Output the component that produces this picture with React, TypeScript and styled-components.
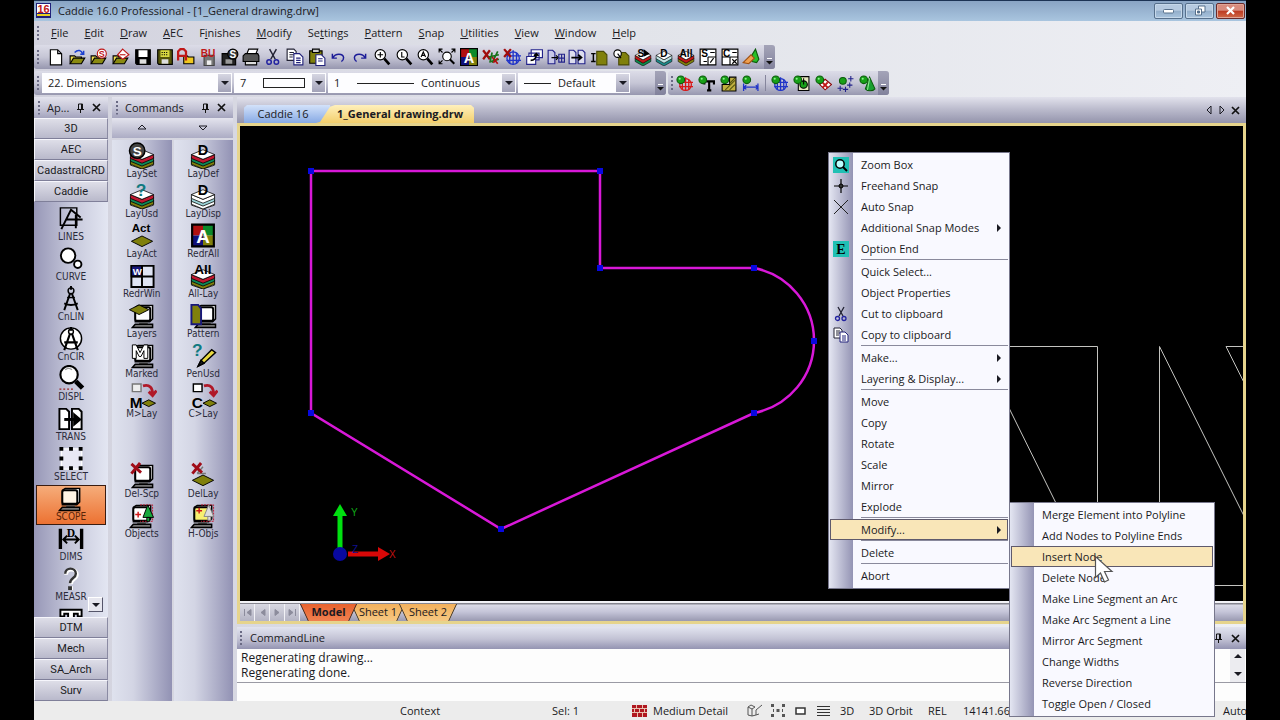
import React from 'react';
import styled, { createGlobalStyle, css } from 'styled-components';

const ui = '"Open Sans", "Noto Sans", sans-serif';
const toolGradient = 'linear-gradient(#dcdce8, #c6c6d6 50%, #9797af)';
const headGradient = 'linear-gradient(#e4e4ee, #c4c4d6 55%, #a3a3bd)';

const GlobalStyle = createGlobalStyle`
  * { box-sizing: border-box; }
  body { margin: 0; background: #000; font: 11px/16px ${ui}; color: #1a1a22; }
  button, select, input { font: inherit; color: inherit; margin: 0; padding: 0; border: 0; background: none; border-radius: 0; outline: none; }
  svg { display: block; flex: none; }
`;

/* ---------- window ---------- */
const Page = styled.div`
  height: 100vh;
  padding: 0 34px;
  background: #000;
`;
const Window = styled.div`
  position: relative;
  height: 100%;
  min-height: 560px;
  display: flex;
  flex-direction: column;
  background: linear-gradient(90deg, #d2d2de, #e2e4ea 50%, #eeeff4);
`;
const TitleBar = styled.header`
  height: 21px;
  flex: none;
  display: flex;
  align-items: center;
  gap: 7px;
  padding: 0 1px 1px 2px;
  border-top: 1px solid #1c3354;
  background: linear-gradient(#89a4c4, #a9c5df);
`;
const Title = styled.h1`
  margin: 0;
  flex: 1;
  font-size: 11px;
  font-weight: 400;
`;
const WindowButtons = styled.div`
  display: flex;
  gap: 2px;
`;
const WindowButton = styled.button<{ $close?: boolean }>`
  width: 29px;
  height: 16px;
  display: grid;
  place-items: center;
  border: 1px solid ${(p) => (p.$close ? '#6a2a2a' : '#57708c')};
  border-radius: 2px;
  box-shadow: inset 0 0 0 1px ${(p) => (p.$close ? '#e0a596' : '#c6d8ea')};
  background: ${(p) =>
    p.$close ? 'linear-gradient(#d88c7e 45%, #bd3a22 50%, #d06a48)' : 'linear-gradient(#b6cae0 45%, #93aeca 50%, #a9c4de)'};
`;
const MenuBar = styled.nav`
  height: 24px;
  flex: none;
  display: flex;
  align-items: center;
  padding-left: 3px;
`;
const Grip = styled.span`
  width: 3px;
  height: 14px;
  flex: none;
  background: repeating-linear-gradient(#6a6a84 0 2px, transparent 2px 4px);
  clip-path: inset(0 1px 0 0);
`;
const MenuItem = styled.button`
  margin-right: 16px;
  white-space: nowrap;
  &:first-of-type { margin-left: 11px; }
`;

/* ---------- toolbars ---------- */
const ToolRow = styled.div`
  display: flex;
  flex: none;
  padding-bottom: 2px;
  gap: 2px;
`;
const Toolbar = styled.div`
  height: 24px;
  display: flex;
  align-items: center;
  padding-left: 3px;
  border-radius: 3px;
  background: ${toolGradient};
`;
const ToolStrip = styled.div<{ $width: number; $inset?: boolean }>`
  display: flex;
  width: ${(p) => p.$width}px;
  margin: ${(p) => (p.$inset ? '0 2px 0 5px' : '0')};
`;
const ToolButton = styled.button`
  flex: 1 1 0;
  min-width: 0;
  height: 20px;
  display: grid;
  place-items: center;
`;
const Divider = styled.span`
  width: 1px;
  height: 16px;
  margin: 2px 3px;
  background: #85859c;
`;
const Overflow = styled.button`
  align-self: stretch;
  width: 11px;
  display: flex;
  align-items: flex-end;
  justify-content: center;
  padding-bottom: 4px;
  border-radius: 0 3px 3px 0;
  background: linear-gradient(#a4a4b8, #82829c);
`;
const Combo = styled.label<{ $width: number }>`
  width: ${(p) => p.$width}px;
  height: 20px;
  margin-left: 2px;
  display: flex;
  align-items: center;
  gap: 7px;
  padding-left: 6px;
  background: #fdfdff;
`;
const ComboSelect = styled.select`
  flex: 1;
  min-width: 0;
  height: 20px;
  appearance: none;
`;
const ComboArrow = styled.span`
  width: 13px;
  height: 18px;
  margin-right: 1px;
  display: grid;
  place-items: center;
  background: linear-gradient(#d6d6e2, #a2a2b8);
`;
const PenNumber = styled.span`
  width: 16px;
`;
const Swatch = styled.span`
  width: 42px;
  height: 10px;
  margin-left: auto;
  border: 1px solid #222;
`;
const LineSample = styled.span<{ $width: number }>`
  width: ${(p) => p.$width}px;
  height: 1px;
  background: #222;
`;

/* ---------- workspace ---------- */
const Workspace = styled.div`
  flex: 1;
  min-height: 0;
  display: flex;
`;
const Panel = styled.aside<{ $width: number }>`
  width: ${(p) => p.$width}px;
  flex: none;
  display: flex;
  flex-direction: column;
  margin-right: 4px;
`;
const PanelHead = styled.div`
  height: 21px;
  flex: none;
  display: flex;
  align-items: center;
  padding: 0 7px 0 4px;
  gap: 6px;
  background: ${headGradient};
`;
const PanelTitle = styled.h2`
  flex: 1;
  margin: 0;
  font-size: 11px;
  font-weight: 400;
`;
const IconButton = styled.button`
  display: grid;
  place-items: center;
  width: 10px;
  height: 12px;
`;
const GroupButton = styled.button`
  height: 21px;
  flex: none;
  font: 11px/19px Roboto, "Liberation Sans", sans-serif;
  border: 1px solid;
  border-color: #f6f6fc #8b8ba3 #7f7f99 #f6f6fc;
  background: linear-gradient(#dedee8, #b9b9cb);
`;
const ToolList = styled.div<{ $side: 'left' | 'right' }>`
  position: relative;
  flex: 1 1 0;
  min-width: 0;
  min-height: 0;
  overflow: hidden;
  display: flex;
  flex-direction: column;
  align-items: stretch;
  padding: ${(p) => (p.$side === 'left' ? 3 : 2)}px 2px 0;
  background: ${(p) =>
    p.$side === 'left'
      ? 'linear-gradient(90deg, #9797b7, #c5c7da 50%, #e3e6f2)'
      : 'linear-gradient(90deg, #dfe2ee, #d3d5e4 35%, #9292b4)'};
`;
const ListItem = styled.button<{ $active?: boolean; $hidden?: boolean }>`
  height: 40px;
  flex: none;
  display: flex;
  flex-direction: column;
  align-items: center;
  font: 10px/10px "DejaVu Sans Condensed", "DejaVu Sans", sans-serif;
  color: #2b2b3a;
  visibility: ${(p) => (p.$hidden ? 'hidden' : 'visible')};
  ${(p) =>
    p.$active &&
    css`
      color: #5a2408;
      box-shadow: inset 0 0 0 1px #3a1c10;
      background: linear-gradient(#f6ae7c, #ec7030);
    `}
`;
const ScrollDown = styled.button`
  position: absolute;
  right: 5px;
  bottom: 5px;
  width: 15px;
  height: 15px;
  display: grid;
  place-items: center;
  border: 1px solid;
  border-color: #fff #55556a #55556a #fff;
  background: #e6e6ee;
`;
const CommandScroll = styled.div`
  display: flex;
  flex: none;
  height: 20px;
  background: linear-gradient(#e4e4ee, #acacc4);
`;
const CommandScrollButton = styled.button`
  flex: 1;
  display: grid;
  place-items: center;
`;
const CommandColumns = styled.div`
  flex: 1;
  min-height: 0;
  display: flex;
  gap: 2px;
  padding-top: 2px;
`;
const Main = styled.main`
  flex: 1;
  min-width: 0;
  display: flex;
  flex-direction: column;
`;
const TabStrip = styled.div`
  height: 26px;
  flex: none;
  display: flex;
  align-items: flex-end;
  padding: 0 6px 0 7px;
  background: linear-gradient(#e2e2ec, #b9b9cb 50%, #9494ac);
`;
const DocTab = styled.button<{ $active?: boolean }>`
  height: 18px;
  width: ${(p) => (p.$active ? 158 : 88)}px;
  padding: ${(p) => (p.$active ? '0 0 0 10px' : '0 10px 0 0')};
  font-weight: ${(p) => (p.$active ? 700 : 400)};
  margin-left: ${(p) => (p.$active ? -16 : 0)}px;
  clip-path: ${(p) =>
    p.$active
      ? 'polygon(0 100%, 4px 94%, 14px 10%, 19px 0, calc(100% - 3px) 0, 100% 15%, 100% 100%)'
      : 'polygon(0 15%, 3px 0, 86px 0, 100% 100%, 0 100%)'};
  background: ${(p) =>
    p.$active ? 'linear-gradient(#fff0bc, #f3cf6c)' : 'linear-gradient(#d3e2fa, #86a9e4)'};
`;
const TabControls = styled.div`
  display: flex;
  gap: 3px;
  margin-left: auto;
  align-self: center;
`;
const DrawingFrame = styled.section`
  flex: 1;
  min-height: 0;
  display: flex;
  flex-direction: column;
  border: 3px solid #e6d48c;
`;
const Canvas = styled.div`
  flex: 1;
  min-height: 0;
  background: #000;
  overflow: hidden;
`;
const SheetRow = styled.div`
  height: 20px;
  flex: none;
  display: flex;
  padding-top: 1px;
  border-top: 2px solid #f2f2f6;
  background: linear-gradient(#85858f 1px, #dcdce8 2px, #c4c4d8 50%, #9999b0);
`;
const SheetNav = styled.button`
  width: 15px;
  display: grid;
  place-items: center;
  border-right: 1px solid #f2f2f6;
  background: linear-gradient(#d8d8e2, #b4b4c4);
`;
const SheetTab = styled.button<{ $active?: boolean; $width: number }>`
  position: relative;
  width: ${(p) => p.$width}px;
  margin-right: -6px;
  padding-bottom: 2px;
  z-index: ${(p) => (p.$active ? 1 : 0)};
  font-weight: ${(p) => (p.$active ? 700 : 400)};
  clip-path: polygon(0 0, 100% 0, calc(100% - 8px) 100%, 8px 100%);
  background: ${(p) => (p.$active ? 'linear-gradient(#e8622e, #f08050)' : 'linear-gradient(#f2b05c, #f6c882)')};
`;
const SheetEdges = styled.svg`
  position: absolute;
  inset: 0;
  width: 100%;
  height: 100%;
`;
const CommandHead = styled.div`
  height: 22px;
  flex: none;
  display: flex;
  align-items: center;
  gap: 7px;
  margin-top: 3px;
  padding: 0 6px 0 3px;
  background: linear-gradient(#e2e4f0, #c2c2d4 55%, #9494b2);
`;
const Log = styled.div`
  height: 34px;
  flex: none;
  display: flex;
  background: #fdfdfd;
  border-bottom: 1px solid #9a9aa4;
`;
const LogLines = styled.ul`
  flex: 1;
  margin: 0;
  padding: 1px 4px;
  list-style: none;
  font-size: 12px;
  line-height: 15px;
`;
const LogScroll = styled.div`
  width: 15px;
  margin-right: 1px;
  display: flex;
  flex-direction: column;
  justify-content: space-around;
  align-items: center;
  background: #ececf0;
`;
const CommandInput = styled.input`
  height: 18px;
  flex: none;
  width: 100%;
  padding: 0 4px;
  background: #fdfdfd;
`;
const StatusBar = styled.footer`
  height: 19px;
  flex: none;
  display: flex;
  align-items: center;
  overflow: hidden;
  white-space: nowrap;
  background: #ececec;
`;
const StatusCell = styled.span<{ $width: number; $end?: boolean }>`
  width: ${(p) => p.$width}px;
  flex: none;
  display: flex;
  align-items: center;
  gap: 6px;
  margin-left: ${(p) => (p.$end ? 'auto' : '0')};
`;
const StatusSpacer = styled.span`
  width: 366px;
  flex: 0 1 auto;
`;

/* ---------- floating menus ---------- */
const Popup = styled.div<{ $left: number; $top: number; $width: number }>`
  position: absolute;
  z-index: 5;
  left: ${(p) => p.$left}px;
  top: ${(p) => p.$top}px;
  width: ${(p) => p.$width}px;
  display: flex;
  flex-direction: column;
  padding: 1px 1px 2px;
  border: 1px solid #77778c;
  background: linear-gradient(90deg, #e4e6f2, #9494b4 24px, #f9f9ff 24px);
`;
const PopupItem = styled.button<{ $active?: boolean }>`
  height: 21px;
  display: flex;
  align-items: center;
  text-align: left;
  padding: 0 4px 0 2px;
  ${(p) =>
    p.$active &&
    css`
      background: #f9e6b8;
      box-shadow: inset 0 0 0 1px #5f5a6c;
    `}
`;
const PopupIcon = styled.span`
  width: 17px;
  margin-right: 12px;
  display: grid;
  place-items: center;
  flex: none;
`;
const PopupLabel = styled.span`
  flex: 1;
`;
const PopupRule = styled.hr`
  width: calc(100% - 31px);
  height: 2px;
  margin: 0 0 0 31px;
  border: 0;
  border-top: 1px solid #8a8a9c;
`;
const Pointer = styled.svg`
  position: absolute;
  z-index: 9;
  left: 1060px;
  top: 555px;
`;

/* ---------- icon pieces ---------- */
type Kids = { children?: React.ReactNode };
const Ico = ({ children, s = 18 }: Kids & { s?: number }) => (
  <svg width={s} height={s} viewBox="0 0 16 16" fill="none" stroke="#000" strokeWidth="1">
    {children}
  </svg>
);
const Big = ({ children }: Kids) => (
  <svg width="30" height="27" viewBox="0 0 30 28" fill="none" stroke="#000" strokeWidth="1.5">
    {children}
  </svg>
);
const T = ({ x, y, z = 9, c = '#000', children, f = 'Liberation Sans' }: Kids & { x: number; y: number; z?: number; c?: string; f?: string }) => (
  <text x={x} y={y} fontSize={z} fill={c} stroke="none" fontWeight="700" fontFamily={f} textAnchor="middle">
    {children}
  </text>
);
const Folder = () => (
  <>
    <path d="M1 14V7h4l1 1h5v2" fill="#f0e050" />
    <path d="M1 14l3-5h10l-3 5z" fill="#8a8a10" />
  </>
);
const Floppy = ({ label = '#fff', body = '#000' }: { label?: string; body?: string }) => (
  <>
    <path d="M1.5 1.5h13v13h-12l-1-1z" fill={body} />
    <path d="M4 2h8v6H4z" fill={label} stroke="none" />
    <path d="M5 10h6v4H5z" fill="#ddd" stroke="none" />
  </>
);
const Lens = ({ children }: Kids) => (
  <>
    <circle cx="6.5" cy="6" r="4.6" fill="#fff" />
    <path d="M10 9.500l4.500 5" strokeWidth="2.400" />
    {children}
  </>
);
const Globe = ({ c }: { c: string }) => (
  <g stroke={c} strokeWidth="1.200">
    <circle cx="9" cy="9" r="5.500" />
    <path d="M9 2v13M3 7h13M3 11h13M6 4v10M12 4v10" />
  </g>
);
const Stack = ({ a = '#c01818', b = '#0c8a4a', top = '#fff' }: { a?: string; b?: string; top?: string }) => (
  <g strokeWidth=".5">
    <path d="M1 9l7 4 7-4v3l-7 4-7-4z" fill={b} />
    <path d="M1 6.500l7 4 7-4v3l-7 4-7-4z" fill={a} />
    <path d="M1 6.500l7-3.500 7 3.500-7 4z" fill={top} />
  </g>
);
const Ball = () => (
  <>
    <circle cx="4.500" cy="4.500" r="3.600" fill="#18a018" stroke="#0b5c0b" />
    <circle cx="3.500" cy="3.500" r="1" fill="#8cf08c" stroke="none" />
  </>
);
const Scissors = () => (
  <>
    <path d="M5 1l5 9M11 1l-5 9" stroke="#223" strokeWidth="1.300" />
    <circle cx="4.500" cy="12.500" r="2" stroke="#2222a0" strokeWidth="1.300" />
    <circle cx="11" cy="12.500" r="2" stroke="#2222a0" strokeWidth="1.300" />
  </>
);
const CopyPages = () => (
  <>
    <path d="M1 1h6l2 2v8H1zM3 4h4M3 6h4M3 8h3" fill="#fff" stroke="#223" />
    <path d="M7 5h5l3 3v7H7zM9 9h4M9 11h4M9 13h4" fill="#fff" stroke="#22227a" />
  </>
);
const ColourA = () => (
  <>
    <path d="M0 0h8v8H0z" fill="#b01010" stroke="none" />
    <path d="M8 0h8v8H8z" fill="#0c8a2a" stroke="none" />
    <path d="M0 8h8v8H0z" fill="#10107a" stroke="none" />
    <path d="M8 8h8v8H8z" fill="#80800c" stroke="none" />
    <path d="M.5.5h15v15H.5z" />
    <T x={8} y={13} z={13} c="#fff">A</T>
  </>
);

const mainTools: [string, React.ReactNode][] = [
  ['New', <path d="M3 1.500h6.500l3.500 3.500v10H3zM9.500 1.500V5H13" fill="#fff" />],
  ['Open', <><Folder /><path d="M5 4c3-3 6-2 7 1M13 2.500v3h-3" stroke="#1c40d0" strokeWidth="1.400" /></>],
  ['Open symbol', <><Folder /><circle cx="10.500" cy="5" r="4" fill="#fff" stroke="#c01818" /><T x={10.5} y={8} z={8} c="#c01818">S</T></>],
  ['Open reference', <><Folder /><path d="M9.500 1l5.500 5-5.500 4L5 6z" fill="#fff" stroke="#c01818" /><path d="M7 6h5" stroke="#c01818" /></>],
  ['Save', <Floppy />],
  ['Save as', <><Floppy label="#d8d840" body="#55550a" /><path d="M5 4h6M5 6h6" strokeDasharray="1 1" /></>],
  ['Archive', <><path d="M6 14V7h3l1 1h5v6z" fill="#f0c820" /><path d="M1 11V3l2-2h3l2 2v8M1 7h7" stroke="#c01818" strokeWidth="2" /></>],
  ['Backup', <><path d="M4.500 6.500h9v9h-9z" fill="#777" stroke="#444" /><path d="M7 11h4v4H7z" fill="#eee" stroke="none" /><T x={8} y={8} z={9} c="#c01818">BU</T></>],
  ['Save symbol', <><path d="M1 5h12v10H1z" fill="#222" /><path d="M4 10h6v4H4z" fill="#999" stroke="none" /><circle cx="10.500" cy="5.500" r="4.500" fill="#333" /><T x={10.5} y={9} z={9} c="#fff">S</T></>],
  ['Print', <><path d="M4 6l2-5h8l-2 5" fill="#fff" /><path d="M1 7l2-2h11l1 2v5H1z" fill="#555" /><path d="M3 12h10v3H3z" fill="#ddd" /></>],
  ['Cut', <Scissors />],
  ['Copy', <CopyPages />],
  ['Paste', <><path d="M1.500 2.500h11v11h-11z" fill="#80800c" /><path d="M4 1h6v3H4z" fill="#ccc" /><path d="M7 6h5l3 3v6.500H7zM9 9.500h4M9 11.500h4" fill="#fff" stroke="#22227a" /></>],
  ['Undo', <path d="M3 5v4h4M3.500 8.500c2-4 9-4 9.500 0 0 2-1 3-2 3.500" stroke="#1c1c98" strokeWidth="1.300" />],
  ['Redo', <path d="M13 5v4H9M12.500 8.500c-2-4-9-4-9.500 0 0 2 1 3 2 3.500" stroke="#1c1c98" strokeWidth="1.300" />],
  ['Zoom in', <Lens><path d="M4 6h5M6.500 3.500v5" /></Lens>],
  ['Zoom 1:1', <Lens><path d="M6 3.500V8h2.500" /></Lens>],
  ['Zoom all', <Lens><path d="M4.500 8l2-4.500 2 4.500M5.500 6.500h2" /></Lens>],
  ['Zoom extents', <><circle cx="8" cy="7.500" r="3.800" fill="#fff" /><path d="M10.500 10l4 4" strokeWidth="1.800" /><path d="M1 1l3 3M15 1l-3 3M1 14l3-3M1 4V1h3M12 1h3v3M1 11v3h3" /></>],
  ['Redraw', <ColourA />],
  ['Delete marks', <><path d="M1 2l6 8M7 2l-6 8" stroke="#a00c0c" strokeWidth="2" /><path d="M9 4l-2 9M14 3L9 13M6 8l9-2M8 12l7-2" stroke="#187018" strokeWidth="1.500" /><path d="M9 8l5 6M14 9l-4 4" stroke="#b01010" strokeWidth="1.500" /></>],
  ['Delete view', <><Globe c="#2034c8" /><path d="M1 1l6 7M7 1L1 8" stroke="#a00c0c" strokeWidth="2" /></>],
  ['Cascade', <><path d="M5.500 1.500h10v7h-10zM3.500 4.500h9v6h-9z" fill="#fff" stroke="#22228a" /><path d="M1.500 7.500h8v7h-8z" fill="#fff" stroke="#22228a" /><path d="M5 11c3 0 5-2 5-5M8 7l2-2 2 2" strokeWidth="1.500" /></>],
  ['Export view', <><path d="M1 2h4l2 2v10H1z" fill="#c8c8e8" stroke="#22228a" /><path d="M4 8.500h5M8 6.500l2 2-2 2" /><path d="M10.500 5.500h5v7h-5zM13 5v8M10 9h6" stroke="#22228a" /></>],
  ['Import view', <><path d="M1 2h4l2 2v10H1zM9 2h4l2 2v10H9z" fill="#dde" stroke="#22228a" /><path d="M3 8.500h8M9 6l3 2.500L9 11" strokeWidth="1.500" /></>],
  ['Insert sheet', <><path d="M6 3h6l3 3v9H6z" fill="#80800c" stroke="#4a4a08" /><path d="M1 5h4M1 12h4M3 5v7" strokeWidth="1.300" /></>],
  ['Query sheet', <><path d="M6 4h6l3 3v8H6z" fill="#80800c" stroke="#4a4a08" /><circle cx="5" cy="5" r="3.300" fill="#fff" /><path d="M5 5l3 4" /></>],
  ['Set layers', <><Stack /><T x={6} y={8} z={9}>S</T><path d="M9 2l4 3-4 2z" fill="#000" /></>],
  ['Display layers', <><Stack a="#bfe4e4" b="#1c8a8a" /><T x={8} y={8} z={9}>D</T></>],
  ['All layers', <><Stack b="#80800c" /><T x={8} y={8} z={9}>All</T></>],
  ['Scope set', <><path d="M1 1h14v14H1zM8 8v7M8 8h7" fill="#fff" /><T x={5} y={8} z={9}>S</T><path d="M10 4h4M4 12h3M10 13l3-4" /></>],
  ['Scope clear', <><path d="M1 1h14v14H1zM8 8v7M1 8h14" fill="#fff" /><T x={5} y={8} z={9}>C</T><path d="M10 4h4M10 10l4 4M14 10l-4 4" /></>],
  ['Render', <><path d="M9 12V6l3-5 3 9-2 3z" fill="#28c028" stroke="#0b5c0b" /><path d="M1 13l7-7 3 3-5 5z" fill="#f0a050" stroke="#a05010" /></>],
];

const snapTools: [string, React.ReactNode][] = [
  ['View attributes', <><Globe c="#d81818" /><Ball /></>],
  ['Text attributes', <><path d="M6 9V6h9v3M10.500 6v9M8.500 14.500h4" strokeWidth="2" /><Ball /></>],
  ['Hatch attributes', <><path d="M9 2h6v13H2V9h7z" fill="#c0b040" /><path d="M9 8l5-5M5 14l9-9M9 14l5-5" stroke="#555510" /><Ball /></>],
  ['Dimension attributes', <><path d="M1.500 8v7M15 8v7M2 11.500h13M4 9.500l-2 2 2 2M13 9.500l2 2-2 2" stroke="#2034c8" strokeWidth="1.200" /><Ball /></>],
  ['', null],
  ['World attributes', <><Globe c="#2034c8" /><Ball /></>],
  ['Symbol attributes', <><path d="M5 1.500h10v13H5z" fill="#e8e8c0" /><circle cx="10" cy="9" r="3.500" fill="#18a018" /><path d="M10 3v6" /><Ball /></>],
  ['Delete attributes', <><path d="M9.500 4l6 5-6 5-5-5z" fill="#fff" stroke="#800" /><path d="M7 7l5 5M12 7l-5 5" stroke="#c01818" strokeWidth="1.800" /><Ball /></>],
  ['Point attributes', <><path d="M13 1v5M10.500 3.500h5M3 10v5M.500 12.500h5M12 7v5M9.500 9.500h5M8 11v5M5.500 13.500h5" stroke="#22228a" /><circle cx="5.500" cy="5.500" r="3.200" fill="#18a018" stroke="#0b5c0b" /></>],
  ['Solid attributes', <><path d="M10 2l5 11c-2 2.500-7 2.500-9 0z" fill="#18a030" stroke="#0b5c0b" /><path d="M10 3l-2 11" stroke="#90e890" /><Ball /></>],
];

/* 30×28 pictures for the palettes */
const Layers = ({ a = '#c01830', b = '#0c8a5a', c = '#80800c' }: { a?: string; b?: string; c?: string }) => (
  <g strokeWidth=".8">
    <path d="M3 19v5l12 4 12-4v-5z" fill="#fff" />
    <path d="M3 19l12 5 12-5v4l-12 5-12-5z" fill={c} />
    <path d="M3 16l12 5 12-5v4l-12 5-12-5z" fill={b} />
    <path d="M3 13l12 5 12-5v4l-12 5-12-5z" fill={a} />
    <path d="M3 13l12-5 12 5-12 5z" fill="#fff" />
  </g>
);
const Monitor = ({ screen = '#fff', x = 0 }: { screen?: string; x?: number }) => (
  <g transform={`translate(${x} 0)`}>
    <path d="M6 5.500l3-2h15v14l-3 3H6z" fill="#ddd" />
    <rect x="6" y="5.500" width="15.500" height="14" rx="2" fill={screen} strokeWidth="2" />
    <path d="M10 21h9v2h-9z" fill="#555" stroke="none" />
    <path d="M3 26.500l3-3.500h18v3.500z" fill="#777" />
  </g>
);
const Diamond = ({ y = 18, x = 15, w = 11 }: { y?: number; x?: number; w?: number }) => (
  <path d={`M${x - w} ${y}l${w} -${w / 2} ${w} ${w / 2} -${w} ${w / 2}z`} fill="#80800c" strokeWidth="1" />
);
const CurveArrow = () => <path d="M16 4c7-2 10 2 10 9M22 10l4 4 4-5" stroke="#b01828" strokeWidth="3" />;
const RedX = () => <path d="M4 2l10 9M13 1L4 12" stroke="#a00c18" strokeWidth="3" />;

const drawTools: [string, React.ReactNode][] = [
  ['LINES', <><path d="M4 3h17v18H4z" /><path d="M5 25l10-20 10 8M10 15h17M20 10v14" strokeWidth="2" /></>],
  ['CURVE', <><circle cx="12" cy="11" r="7.500" fill="#fff" strokeWidth="2" /><circle cx="22" cy="20" r="3.800" fill="#fff" strokeWidth="2" /></>],
  ['CnLIN', <><circle cx="15" cy="6" r="3" /><path d="M15 1v4M14 9L8 26M16 9l6 17M8 19c4 2 10 2 14 0" strokeWidth="2" /><path d="M11 13h8" /></>],
  ['CnCIR', <><circle cx="15" cy="14" r="11" fill="#fff" /><circle cx="15" cy="7" r="2.500" /><path d="M15 2v4M14 9L8 26M16 9l6 17M8 18h14" strokeWidth="2.200" /></>],
  ['DISPL', <><circle cx="13" cy="10" r="9" fill="#fff" strokeWidth="2.200" /><path d="M9 5c2-2 5-2 7 0" stroke="#999" /><path d="M20 17l7 7" strokeWidth="5" /><path d="M3 25h14" strokeDasharray="2 2" stroke="#922" /></>],
  ['TRANS', <><path d="M3 4h7l3 3v18H3zM16 4h7l3 3v18H16z" fill="#fff" strokeWidth="2" /><path d="M8 15h13" strokeWidth="3" /><path d="M18 9l7 6-7 6z" fill="#000" /></>],
  ['SELECT', <><path d="M5 4h21v21H5z" fill="#e8e8f4" stroke="#fff" /><path d="M3 2h4v4H3zM13 2h4v4h-4zM23 2h4v4h-4zM3 12h4v4H3zM23 12h4v4h-4zM3 22h4v4H3zM13 22h4v4h-4zM23 22h4v4h-4z" fill="#000" stroke="none" /></>],
  ['SCOPE', <Monitor screen="#fff4e4" />],
  ['DIMS', <><path d="M4 4v21M26 4v21" strokeWidth="3.500" /><path d="M7 15h16M11 11l-4 4 4 4M19 11l4 4-4 4" strokeWidth="2" /><T x={15} y={12} z={12} f="Liberation Serif">D</T></>],
  ['MEASR', <><path d="M10 10c0-7 11-7 11 0 0 5-6 4-6 10M13 24h4" stroke="#fff" strokeWidth="4" /><path d="M9 9c0-7 11-7 11 0 0 5-6 4-6 10" stroke="#333" strokeWidth="2.500" /><path d="M12 22h4v4h-4z" fill="#333" stroke="none" /></>],
];
const textTool = <path d="M4 5h22v7h-4V9h-4v19h-6V9H8v3H4z" fill="#fff" strokeWidth="2" />;

const leftCommands: [string, React.ReactNode][] = [
  ['LaySet', <><Layers /><circle cx="10" cy="9" r="8" fill="#444" /><T x={10} y={14} z={14} c="#fff">S</T></>],
  ['LayUsd', <><Layers /><T x={14} y={15} z={18} c="#107a80">?</T></>],
  ['LayAct', <><T x={14} y={10} z={12}>Act</T><Diamond y={20} /></>],
  ['RedrWin', <><path d="M4 4h23v22H4z" fill="#dfe4f4" strokeWidth="2" /><path d="M4 4h11v11H4z" fill="#18187a" /><path d="M15 4v22M4 15h23" strokeWidth="2" /><T x={10} y={13} z={10} c="#fff">W</T></>],
  ['Layers', <><Monitor x={2} /><Diamond y={8} x={12} w={10} /></>],
  ['Marked', <><Monitor x={2} /><path d="M5 17V3h4l4 8 4-8h4v14h-4V9l-3 6h-2L9 9v8z" fill="#fff" strokeWidth="1" /></>],
  ['M>Lay', <><path d="M5 2h9v8H5z" fill="#eee" stroke="#777" /><CurveArrow /><T x={9} y={27} z={16}>M</T><Diamond x={22} y={22} w={7} /></>],
  ['', null],
  ['Del-Scp', <><Monitor x={2} /><RedX /></>],
  ['Objects', <><Monitor /><path d="M13 3h13v17H13" stroke="#c01830" strokeDasharray="2 1" strokeWidth="1" /><path d="M21 3l6 13H16zM20 16h3v4h-3z" fill="#18a83c" strokeWidth="1" /><path d="M8 13h6M11 10v6" stroke="#d01818" /></>],
];
const rightCommands: [string, React.ReactNode][] = [
  ['LayDef', <><Layers /><T x={15} y={13} z={15}>D</T></>],
  ['LayDisp', <><Layers a="#fff" b="#9cd4d8" c="#fff" /><T x={15} y={13} z={15}>D</T></>],
  ['RedrAll', <g transform="translate(3 2) scale(1.500)"><ColourA /></g>],
  ['All-Lay', <><Layers /><T x={15} y={12} z={14}>All</T></>],
  ['Pattern', <><Monitor x={4} /><path d="M3 3h7l3 4v16H3z" fill="#80800c" stroke="#18187a" strokeWidth="2" /></>],
  ['PenUsd', <><T x={9} y={15} z={18} c="#107a80">?</T><path d="M10 25l3-6L24 8l4 3-12 11z" fill="#e8d840" /><path d="M10 25l3-6 3 3z" fill="#222" /></>],
  ['C>Lay', <><path d="M5 2h9v8H5z" fill="#fff" /><CurveArrow /><T x={9} y={27} z={16}>C</T><Diamond x={22} y={22} w={7} /></>],
  ['', null],
  ['DelLay', <><path d="M9 12l6-7M9 12h9" stroke="#777" /><RedX /><Diamond y={19} /></>],
  ['H-Objs', <><Monitor screen="#f8f070" /><path d="M13 3h13v17H13" stroke="#c01830" strokeDasharray="2 1" strokeWidth="1" /><path d="M21 3l5 12H16zM20 15h3v4h-3z" fill="#ddd" stroke="#888" strokeWidth="1" /><path d="M8 9h6M11 6v6" stroke="#d01818" /></>],
];

const Tri = ({ d, o }: { d: 'up' | 'down' | 'left' | 'right'; o?: boolean }) => {
  const paths = { up: 'M1 6l4-4 4 4z', down: 'M1 3h8L5 7z', left: 'M7 1v8L3 5z', right: 'M3 1v8l4-4z' };
  return (
    <svg width="10" height="10" viewBox="0 0 10 10" fill={o ? 'none' : 'currentColor'} stroke={o ? 'currentColor' : 'none'}>
      <path d={paths[d]} />
    </svg>
  );
};
const Pin = () => (
  <IconButton aria-label="Pin">
    <svg width="9" height="10" fill="none" stroke="#111"><path d="M2.500 6V1h4v5M5.500 1v5M1 6.500h7M4.500 7v3" /></svg>
  </IconButton>
);
const Close = () => (
  <IconButton aria-label="Close">
    <svg width="9" height="9" stroke="#111" strokeWidth="1.700"><path d="M1 1l7 7M8 1L1 8" /></svg>
  </IconButton>
);
const More = () => (
  <Overflow aria-label="More tools">
    <svg width="7" height="7"><path d="M1 .500h5" stroke="#fff" /><path d="M0 3h7L3.500 6.500z" fill="#111" /></svg>
  </Overflow>
);
const Underlined = ({ label, at }: { label: string; at: number }) => (
  <>{label.slice(0, at)}<u>{label[at]}</u>{label.slice(at + 1)}</>
);

const menus: [string, number][] = [
  ['File', 0], ['Edit', 0], ['Draw', 0], ['AEC', 0], ['Finishes', 1], ['Modify', 0], ['Settings', 2],
  ['Pattern', 0], ['Snap', 0], ['Utilities', 0], ['View', 0], ['Window', 0], ['Help', 0],
];

type Entry = { label: string; icon?: React.ReactNode; sub?: boolean; active?: boolean };
const contextGroups: Entry[][] = [
  [
    { label: 'Zoom Box', icon: <><path d="M0 0h16v16H0z" fill="#20c0b4" stroke="none" /><circle cx="7" cy="7" r="4.200" fill="#bff" strokeWidth="1.500" /><path d="M10 10l4 4" strokeWidth="2" /></> },
    { label: 'Freehand Snap', icon: <><path d="M8 1v14M1 8h14" strokeWidth="1.200" /><circle cx="8" cy="8" r="2" fill="#333" /></> },
    { label: 'Auto Snap', icon: <path d="M1 1l14 14M15 1L1 15" stroke="#222" /> },
    { label: 'Additional Snap Modes', sub: true },
    { label: 'Option End', icon: <><path d="M0 0h16v16H0z" fill="#20c0b4" stroke="none" /><T x={8} y={13} z={14} f="Liberation Serif">E</T></> },
  ],
  [
    { label: 'Quick Select...' },
    { label: 'Object Properties' },
    { label: 'Cut to clipboard', icon: <Scissors /> },
    { label: 'Copy to clipboard', icon: <CopyPages /> },
  ],
  [{ label: 'Make...', sub: true }, { label: 'Layering & Display...', sub: true }],
  [{ label: 'Move' }, { label: 'Copy' }, { label: 'Rotate' }, { label: 'Scale' }, { label: 'Mirror' }, { label: 'Explode' }],
  [{ label: 'Modify...', sub: true, active: true }],
  [{ label: 'Delete' }],
  [{ label: 'Abort' }],
];
const modifyGroups: Entry[][] = [[
  { label: 'Merge Element into Polyline' }, { label: 'Add Nodes to Polyline Ends' }, { label: 'Insert Node', active: true },
  { label: 'Delete Node' }, { label: 'Make Line Segment an Arc' }, { label: 'Make Arc Segment a Line' },
  { label: 'Mirror Arc Segment' }, { label: 'Change Widths' }, { label: 'Reverse Direction' }, { label: 'Toggle Open / Closed' },
]];

const PopupMenu = ({ groups, ...box }: { groups: Entry[][]; $left: number; $top: number; $width: number }) => (
  <Popup role="menu" {...box}>
    {groups.map((group, g) => (
      <React.Fragment key={g}>
        {g > 0 && <PopupRule />}
        {group.map((e) => (
          <PopupItem key={e.label} role="menuitem" $active={e.active}>
            <PopupIcon>{e.icon && <Ico s={16}>{e.icon}</Ico>}</PopupIcon>
            <PopupLabel>{e.label}</PopupLabel>
            {e.sub && <Tri d="right" />}
          </PopupItem>
        ))}
      </React.Fragment>
    ))}
  </Popup>
);

const CommandList = ({ items, side }: { items: [string, React.ReactNode][]; side: 'left' | 'right' }) => (
  <ToolList $side={side}>
    {items.map(([label, icon], i) => (
      <ListItem key={i} $active={label === 'SCOPE'} $hidden={!label}>
        <Big>{icon}</Big>
        {label}
      </ListItem>
    ))}
    {side === 'left' && (
      <>
        <ListItem aria-label="Text"><Big>{textTool}</Big></ListItem>
        <ScrollDown aria-label="Scroll down"><Tri d="down" /></ScrollDown>
      </>
    )}
  </ToolList>
);

const nodes = [[311, 171], [600, 171], [600, 268], [754, 268], [814, 341], [754, 413], [501, 529], [311, 413]];

const Drawing = () => (
  <svg width="100%" height="100%" fill="none">
    <g transform="translate(-240 -126)">
      <g stroke="#c4c4c0">
        <path d="M900 346.500h197.500V585M1159.500 600V346.500L1245 518M1245 346.500h-19l19 38M970 329l120 243M1200 585.500h60" />
      </g>
      <path d="M311 171h289v97h154A73.800 73.800 0 0 1 754 413L501 529 311 413z" stroke="#d818d8" strokeWidth="2.500" />
      {nodes.map(([x, y]) => <rect key={`${x}-${y}`} x={x - 3} y={y - 3} width="6" height="6" fill="#0808e0" />)}
      <path d="M340 548v-34" stroke="#00e010" strokeWidth="5" />
      <path d="M333 516l7-12 7 12z" fill="#00e010" />
      <path d="M348 554h32" stroke="#d80808" strokeWidth="5" />
      <path d="M378 547l12 7-12 7z" fill="#d80808" />
      <circle cx="340" cy="554" r="7" fill="#0808a0" />
      <g fontFamily="Liberation Sans" fontSize="10">
        <text x="351" y="516" fill="#10a818">Y</text>
        <text x="389" y="558" fill="#c01010">X</text>
        <text x="352" y="553" fill="#101090">Z</text>
      </g>
    </g>
  </svg>
);

const SheetTabButton = ({ label, width, active }: { label: string; width: number; active?: boolean }) => (
  <SheetTab $width={width} $active={active}>
    <SheetEdges viewBox={`0 0 ${width} 17`} preserveAspectRatio="none" fill="none" stroke="#222">
      <path d={`M0 0l8 17M${width} 0l-8 17`} strokeWidth="1.500" />
    </SheetEdges>
    {label}
  </SheetTab>
);

export default function App() {
  return (
    <Page>
      <GlobalStyle />
      <Window>
        <TitleBar>
          <svg width="15" height="15" viewBox="0 0 15 15">
            <path d="M0 0h15v15H0z" fill="#20207a" />
            <path d="M1 1h13v9H1z" fill="#fff" />
            <path d="M1 11h13v2H1z" fill="#e8d020" />
            <text x="7.500" y="10" fontSize="11" fontWeight="700" fontFamily="Liberation Sans" textAnchor="middle" fill="#c01818">16</text>
          </svg>
          <Title>Caddie 16.0 Professional - [1_General drawing.drw]</Title>
          <WindowButtons>
            <WindowButton aria-label="Minimize">
              <svg width="11" height="6"><rect x=".5" y="1.500" width="10" height="3.500" rx="1" fill="#fff" stroke="#57708c" /></svg>
            </WindowButton>
            <WindowButton aria-label="Restore">
              <svg width="12" height="11" stroke="#57708c" fill="#fff"><path d="M4.500 1h6.500v6H4.500z" /><path d="M1.500 4h6v6h-6z" /><path d="M3.500 6h2v2h-2z" fill="#57708c" /></svg>
            </WindowButton>
            <WindowButton $close aria-label="Close">
              <svg width="11" height="9" stroke="#fff" strokeWidth="2.200"><path d="M2 1l7 7M9 1L2 8" /></svg>
            </WindowButton>
          </WindowButtons>
        </TitleBar>

        <MenuBar>
          <Grip />
          {menus.map(([label, at]) => <MenuItem key={label}><Underlined label={label} at={at} /></MenuItem>)}
        </MenuBar>

        <ToolRow>
          <Toolbar>
            <Grip />
            <ToolStrip $width={717} $inset>
              {mainTools.map(([name, icon]) => <ToolButton key={name} aria-label={name}><Ico>{icon}</Ico></ToolButton>)}
            </ToolStrip>
            <More />
          </Toolbar>
        </ToolRow>
        <ToolRow>
          <Toolbar>
            <Grip />
            <Combo $width={190}>
              <ComboSelect aria-label="Layer" defaultValue="d"><option value="d">22. Dimensions</option></ComboSelect>
              <ComboArrow><Tri d="down" /></ComboArrow>
            </Combo>
            <Combo $width={92}>
              <PenNumber>7</PenNumber>
              <Swatch />
              <ComboArrow><Tri d="down" /></ComboArrow>
            </Combo>
            <Combo $width={188}>
              <PenNumber>1</PenNumber>
              <LineSample $width={57} />
              <ComboSelect aria-label="Line type" defaultValue="c"><option value="c">Continuous</option></ComboSelect>
              <ComboArrow><Tri d="down" /></ComboArrow>
            </Combo>
            <Combo $width={112}>
              <LineSample $width={27} />
              <ComboSelect aria-label="Line width" defaultValue="c"><option value="c">Default</option></ComboSelect>
              <ComboArrow><Tri d="down" /></ComboArrow>
            </Combo>
            <ToolStrip $width={25} />
            <More />
          </Toolbar>
          <Toolbar>
            <Grip />
            <ToolStrip $width={204}>
              {snapTools.map(([name, icon], i) =>
                name ? <ToolButton key={i} aria-label={name}><Ico s={17}>{icon}</Ico></ToolButton> : <Divider key={i} />
              )}
            </ToolStrip>
            <More />
          </Toolbar>
        </ToolRow>

        <Workspace>
          <Panel $width={74}>
            <PanelHead>
              <Grip />
              <PanelTitle>Ap...</PanelTitle>
              <Pin />
              <Close />
            </PanelHead>
            {['3D', 'AEC', 'CadastralCRD', 'Caddie'].map((g) => <GroupButton key={g}>{g}</GroupButton>)}
            <CommandList items={drawTools} side="left" />
            {['DTM', 'Mech', 'SA_Arch', 'Surv'].map((g) => <GroupButton key={g}>{g}</GroupButton>)}
          </Panel>
          <Panel $width={121}>
            <PanelHead>
              <Grip />
              <PanelTitle>Commands</PanelTitle>
              <Pin />
              <Close />
            </PanelHead>
            <CommandScroll>
              <CommandScrollButton aria-label="Scroll up"><Tri d="up" o /></CommandScrollButton>
              <CommandScrollButton aria-label="Scroll down"><Tri d="down" o /></CommandScrollButton>
            </CommandScroll>
            <CommandColumns>
              <CommandList items={leftCommands} side="right" />
              <CommandList items={rightCommands} side="right" />
            </CommandColumns>
          </Panel>

          <Main>
            <TabStrip>
              <DocTab>Caddie 16</DocTab>
              <DocTab $active>1_General drawing.drw</DocTab>
              <TabControls>
                <IconButton aria-label="Previous tab"><Tri d="left" o /></IconButton>
                <IconButton aria-label="Next tab"><Tri d="right" o /></IconButton>
                <Close />
              </TabControls>
            </TabStrip>
            <DrawingFrame>
              <Canvas><Drawing /></Canvas>
              <SheetRow>
                {['First', 'Previous', 'Next', 'Last'].map((name, i) => (
                  <SheetNav key={name} aria-label={name}>
                    <svg width="9" height="9" fill="#8c8c9c" stroke="#8c8c9c">
                      <path d={['M1.500 1v7M8 1.500v6L4 4.500z', 'M7 1.500v6L3 4.500z', 'M2 1.500v6l4-3z', 'M7.500 1v7M1 1.500v6l4-3z'][i]} strokeWidth="1" />
                    </svg>
                  </SheetNav>
                ))}
                <SheetTabButton label="Model" width={57} active />
                <SheetTabButton label="Sheet 1" width={54} />
                <SheetTabButton label="Sheet 2" width={58} />
              </SheetRow>
            </DrawingFrame>
            <CommandHead>
              <Grip />
              <PanelTitle>CommandLine</PanelTitle>
              <Pin />
              <Close />
            </CommandHead>
            <Log>
              <LogLines>
                <li>Regenerating drawing...</li>
                <li>Regenerating done.</li>
              </LogLines>
              <LogScroll><Tri d="up" /><Tri d="down" /></LogScroll>
            </Log>
            <CommandInput aria-label="Command" />
          </Main>
        </Workspace>

        <StatusBar>
          <StatusSpacer />
          <StatusCell $width={152}>Context</StatusCell>
          <StatusCell $width={80}>Sel: 1</StatusCell>
          <StatusCell $width={115}>
            <svg width="15" height="12"><path d="M0 0h15v12H0z" fill="#b01820" /><path d="M0 3.500h15M0 7.500h15M4.500 0v3M10.500 0v3M2.500 4v3M7.500 4v3M12.500 4v3M5.500 8v4M10.500 8v4" stroke="#e8c0b0" /></svg>
            Medium Detail
          </StatusCell>
          <StatusCell $width={24}>
            <svg width="16" height="13" fill="none" stroke="#555"><path d="M1 3l3-2 4 2M1 3v8l4 1V5L1 3M5 5l3-2M9 6l6-5M9 6v5l3-1M5 12l4-1" /></svg>
          </StatusCell>
          <StatusCell $width={24}>
            <svg width="14" height="13" fill="#555"><path d="M0 0h3v3H0zM11 0h3v3h-3zM0 10h3v3H0zM11 10h3v3h-3zM5.500 5h3v3h-3zM2 5h1v3H2zM11 5h1v3h-1z" /></svg>
          </StatusCell>
          <StatusCell $width={22}>
            <svg width="11" height="8" fill="#fff" stroke="#333" strokeWidth="1.500"><path d="M1 1h9v6H1z" /></svg>
          </StatusCell>
          <StatusCell $width={23}>
            <svg width="13" height="11" stroke="#333"><path d="M0 1.500h13M0 4.500h13M0 7.500h13M0 10.500h13" /></svg>
          </StatusCell>
          <StatusCell $width={29}>3D</StatusCell>
          <StatusCell $width={59}>3D Orbit</StatusCell>
          <StatusCell $width={35}>REL</StatusCell>
          <StatusCell $width={60}>14141.661,</StatusCell>
          <StatusCell $width={23} $end>Auto</StatusCell>
        </StatusBar>

        <PopupMenu groups={contextGroups} $left={794} $top={152} $width={182} />
        <PopupMenu groups={modifyGroups} $left={975} $top={502} $width={206} />
        <Pointer width="22" height="32" viewBox="0 0 22 32">
          <path d="M1.500 1.500v21l5-4.500 4 9 4-2-4-8.500h7.500z" fill="#fff" stroke="#555" strokeWidth="1.200" />
        </Pointer>
      </Window>
    </Page>
  );
}
